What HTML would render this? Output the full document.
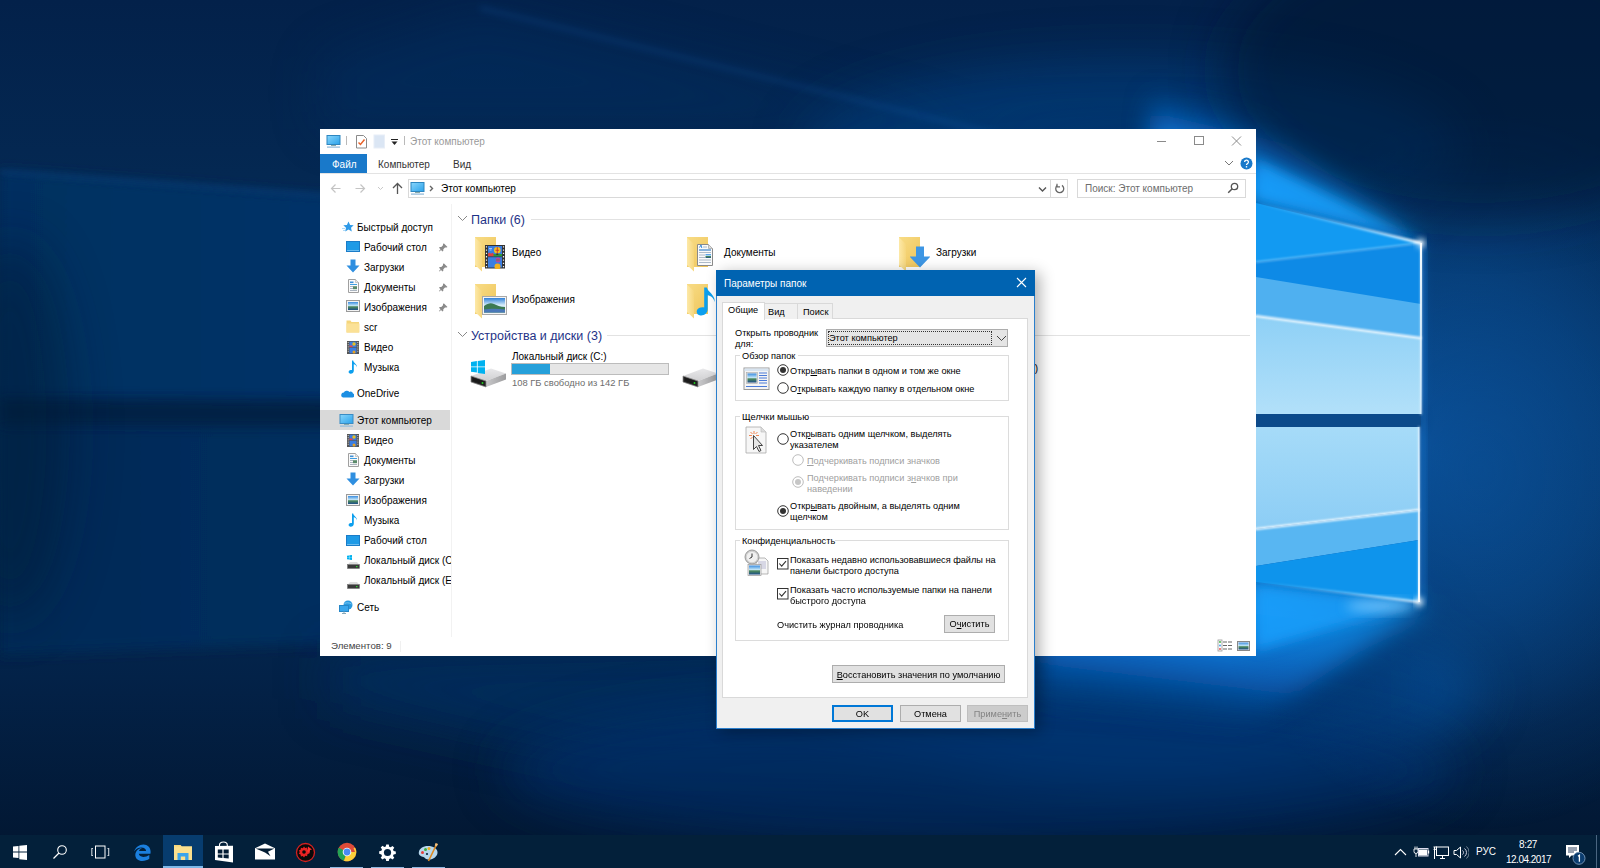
<!DOCTYPE html>
<html><head><meta charset="utf-8">
<style>
*{margin:0;padding:0;box-sizing:border-box}
html,body{width:1600px;height:868px;overflow:hidden;background:#022550}
body{position:relative;font-family:"Liberation Sans",sans-serif;font-size:10px;color:#000}
.a{position:absolute;white-space:nowrap;line-height:12px}
.d{font-size:9.2px;line-height:11px}
u{text-decoration:underline;text-underline-offset:1px}
#wall{position:absolute;left:0;top:0}
#exp{position:absolute;left:320px;top:129px;width:936px;height:527px;background:#fff}
#dlg{position:absolute;left:716px;top:270px;width:319px;height:459px;background:#f0f0f0;border:1px solid #2b7fcc;border-top:none;box-shadow:5px 3px 14px rgba(0,0,0,.3)}
#tb{position:absolute;left:0;top:835px;width:1600px;height:33px;background:#03203a}
</style></head><body>
<svg id="wall" width="1600" height="868" viewBox="0 0 1600 868">
<defs>
<linearGradient id="bg" x1="0" y1="0" x2="0" y2="1">
<stop offset="0" stop-color="#03214a"/>
<stop offset=".2" stop-color="#042852"/>
<stop offset=".5" stop-color="#04305f"/>
<stop offset=".78" stop-color="#032248"/>
<stop offset=".96" stop-color="#021834"/>
<stop offset="1" stop-color="#021630"/>
</linearGradient>
<linearGradient id="pu" x1="0" y1="0" x2="1600" y2="0" gradientUnits="userSpaceOnUse">
<stop offset="0" stop-color="#042f60"/>
<stop offset=".5" stop-color="#053a72"/>
<stop offset=".78" stop-color="#0a5cb0"/>
<stop offset=".88" stop-color="#1278d8"/>
</linearGradient>
<linearGradient id="pl" x1="0" y1="0" x2="1600" y2="0" gradientUnits="userSpaceOnUse">
<stop offset="0" stop-color="#032a56"/>
<stop offset=".5" stop-color="#04346a"/>
<stop offset=".78" stop-color="#0a5cb0"/>
<stop offset=".88" stop-color="#1278d8"/>
</linearGradient>
<radialGradient id="gc1" cx="1421" cy="243" r="330" gradientUnits="userSpaceOnUse">
<stop offset="0" stop-color="#52b4ff" stop-opacity="1"/>
<stop offset=".12" stop-color="#1e8ef0" stop-opacity=".95"/>
<stop offset=".4" stop-color="#0c66c4" stop-opacity=".7"/>
<stop offset="1" stop-color="#0a4a90" stop-opacity="0"/>
</radialGradient>
<radialGradient id="gc2" cx="1419" cy="601" r="380" gradientUnits="userSpaceOnUse">
<stop offset="0" stop-color="#52b4ff" stop-opacity="1"/>
<stop offset=".12" stop-color="#1e8ef0" stop-opacity=".95"/>
<stop offset=".4" stop-color="#0c66c4" stop-opacity=".7"/>
<stop offset="1" stop-color="#0a4a90" stop-opacity="0"/>
</radialGradient>
<radialGradient id="gr" cx="1421" cy="450" r="300" gradientUnits="userSpaceOnUse">
<stop offset="0" stop-color="#0b55a2" stop-opacity="1"/>
<stop offset=".6" stop-color="#074482" stop-opacity=".6"/>
<stop offset="1" stop-color="#063a70" stop-opacity="0"/>
</radialGradient>
<linearGradient id="up1" x1="0" y1="0" x2="0" y2="1">
<stop offset="0" stop-color="#1282e0"/>
<stop offset="1" stop-color="#1a8ce6"/>
</linearGradient>
<linearGradient id="up3" x1="0" y1="0" x2="0" y2="1">
<stop offset="0" stop-color="#8ed0f6"/>
<stop offset="1" stop-color="#b2e0f9"/>
</linearGradient>
<linearGradient id="lo1" x1="0" y1="0" x2="0" y2="1">
<stop offset="0" stop-color="#a6dbf8"/>
<stop offset="1" stop-color="#8ccdf5"/>
</linearGradient>
<filter id="b1" x="-5%" y="-5%" width="110%" height="110%"><feGaussianBlur stdDeviation="1"/></filter>
<filter id="b3" x="-20%" y="-20%" width="140%" height="140%"><feGaussianBlur stdDeviation="3"/></filter>
<filter id="b12" x="-50%" y="-50%" width="200%" height="200%"><feGaussianBlur stdDeviation="12"/></filter>
<filter id="b25" x="-50%" y="-50%" width="200%" height="200%"><feGaussianBlur stdDeviation="25"/></filter>
<filter id="b6" x="-50%" y="-50%" width="200%" height="200%"><feGaussianBlur stdDeviation="6"/></filter>
<radialGradient id="grr" cx="1480" cy="470" r="300" gradientUnits="userSpaceOnUse" gradientTransform="translate(1480 470) scale(1 1.2) translate(-1480 -470)">
<stop offset="0" stop-color="#0a4c90" stop-opacity=".7"/>
<stop offset=".6" stop-color="#0a4a8e" stop-opacity=".35"/>
<stop offset="1" stop-color="#0a4a8e" stop-opacity="0"/>
</radialGradient>
</defs>
<rect width="1600" height="868" fill="url(#bg)"/>
<rect x="1100" y="0" width="500" height="868" fill="url(#gr)"/>
<!-- pane projections -->
<g filter="url(#b6)">
<polygon points="0,170 330,196 1256,203 1421,243 1421,400 0,400" fill="url(#pu)"/>
<polygon points="0,426 1419,427 1419,601 1000,640 330,643 0,655" fill="url(#pl)"/>
</g>
<g filter="url(#b25)">
<ellipse cx="1130" cy="150" rx="330" ry="90" fill="#0a56a8" opacity=".35"/>
<ellipse cx="1150" cy="690" rx="330" ry="90" fill="#0a56a8" opacity=".55"/>
<polygon points="330,656 1000,640 1419,601 1419,760 600,760 330,700" fill="#053068" opacity=".6"/>
</g>
<polygon points="0,398 1421,412 1421,428 0,426" fill="#021b3c" opacity=".75" filter="url(#b6)"/>
<ellipse cx="10" cy="430" rx="60" ry="190" fill="#021a38" opacity=".5" filter="url(#b25)"/>
<ellipse cx="980" cy="770" rx="480" ry="75" fill="#053270" opacity=".6" filter="url(#b25)"/>
<path d="M0,172 L330,196" stroke="#1a5aa0" stroke-width="4" opacity=".3" filter="url(#b3)"/>
<path d="M480,8 L1000,135" stroke="#1a63b5" stroke-width="6" opacity=".2" filter="url(#b3)"/>
<polygon points="480,8 1256,200 1256,129 320,129 320,60" fill="#053068" opacity=".35" filter="url(#b25)"/>
<!-- fans -->
<defs>
<linearGradient id="fanU" x1="1300" y1="214" x2="1321" y2="126" gradientUnits="userSpaceOnUse">
<stop offset="0" stop-color="#1aa6ff"/>
<stop offset=".3" stop-color="#0e8ef0"/>
<stop offset=".65" stop-color="#0a66c4" stop-opacity=".8"/>
<stop offset="1" stop-color="#0a4a90" stop-opacity="0"/>
</linearGradient>
<linearGradient id="fanL" x1="1300" y1="587" x2="1282" y2="736" gradientUnits="userSpaceOnUse">
<stop offset="0" stop-color="#1aa6ff"/>
<stop offset=".3" stop-color="#0e8ef0"/>
<stop offset=".65" stop-color="#0a66c4" stop-opacity=".8"/>
<stop offset="1" stop-color="#0a4a90" stop-opacity="0"/>
</linearGradient>
</defs>
<g filter="url(#b12)">
<polygon points="1425,243 1256,203 1150,178 1150,90 1256,120" fill="url(#fanU)"/>
<polygon points="1423,602 1256,582 1040,556 1040,760 1256,720 1423,610" fill="url(#fanL)"/>
</g>
<rect x="1100" y="0" width="500" height="868" fill="url(#grr)"/>
<ellipse cx="1480" cy="70" rx="260" ry="150" fill="#011632" opacity=".55" filter="url(#b25)"/>
<linearGradient id="streak" x1="1256" y1="0" x2="1421" y2="0" gradientUnits="userSpaceOnUse"><stop offset="0" stop-color="#8fd4ff" stop-opacity="0"/><stop offset=".5" stop-color="#aee0ff" stop-opacity=".5"/><stop offset="1" stop-color="#ffffff" stop-opacity="1"/></linearGradient>
<rect x="1420" y="243" width="6" height="360" fill="#1a78d0" opacity=".45" filter="url(#b3)"/>
<g filter="url(#b6)"><polygon points="1423,243 1256,200 1256,160" fill="#1aa2ff" opacity=".75"/><polygon points="1423,602 1256,584 1256,650" fill="#1aa2ff" opacity=".75"/></g>
<!-- upper pane -->
<polygon points="1256,203 1421,243 1421,414 1256,414" fill="#129af2"/>
<polygon points="1256,262 1421,243 1421,414 1256,414" fill="#0e8ae6"/>
<polygon points="1256,277 1421,304 1421,414 1256,414" fill="#4fb0f0"/>
<polygon points="1256,316 1421,338 1421,414 1256,414" fill="url(#up3)"/>
<!-- lower pane -->
<polygon points="1256,427 1419,427 1419,510 1256,529" fill="url(#lo1)"/>
<polygon points="1256,529 1419,510 1419,540 1256,566" fill="#58b6f2"/>
<polygon points="1256,566 1419,540 1419,602 1256,582" fill="#0e94ec"/>
<rect x="1256" y="414" width="165" height="13" fill="#0c4a8a"/>
<linearGradient id="vedgeU" x1="0" y1="243" x2="0" y2="414" gradientUnits="userSpaceOnUse"><stop offset="0" stop-color="#fff"/><stop offset=".5" stop-color="#e8f6ff" stop-opacity=".8"/><stop offset="1" stop-color="#cfeaff" stop-opacity=".5"/></linearGradient>
<linearGradient id="vedgeL" x1="0" y1="602" x2="0" y2="427" gradientUnits="userSpaceOnUse"><stop offset="0" stop-color="#fff"/><stop offset=".5" stop-color="#e8f6ff" stop-opacity=".8"/><stop offset="1" stop-color="#cfeaff" stop-opacity=".5"/></linearGradient>
<rect x="1420" y="243" width="2" height="171" fill="url(#vedgeU)"/>
<rect x="1418" y="427" width="2" height="175" fill="url(#vedgeL)"/>
<!-- light lines -->
<g filter="url(#b1)" stroke-linecap="round">
<path d="M1256,203 L1421,243" stroke="url(#streak)" stroke-width="2.5"/>

<path d="M1256,262 L1421,243" stroke="#c8eaff" stroke-width="1.2" opacity=".75"/>
<path d="M1256,316 L1421,338" stroke="#ffffff" stroke-width="2.2"/>
<path d="M1256,529 L1419,510" stroke="#ffffff" stroke-width="2.2"/>
<path d="M1256,582 L1419,602" stroke="url(#streak)" stroke-width="2.2"/>
<path d="M1421,243 L1421,414 M1419,427 L1419,602" stroke="#e8f6ff" stroke-width="1.3" opacity=".9"/>
</g>
<g filter="url(#b3)">
<circle cx="1421" cy="243" r="4" fill="#ffffff"/>
<circle cx="1419" cy="602" r="4" fill="#ffffff"/>

</g><g filter="url(#b6)"><ellipse cx="1380" cy="606" rx="34" ry="6" fill="#9fd8ff" opacity=".6"/>
</g>
</svg>

<div id="exp"></div>
<svg width="0" height="0" style="position:absolute">
<defs>
<linearGradient id="mon2" x1="0" y1="0" x2="1" y2="1"><stop offset="0" stop-color="#8ad6fc"/><stop offset="1" stop-color="#2aa2ea"/></linearGradient>
<linearGradient id="fback" x1="0" y1="0" x2="1" y2="1"><stop offset="0" stop-color="#f8dc86"/><stop offset="1" stop-color="#efc55a"/></linearGradient>
<linearGradient id="fflap" x1="0" y1="0" x2="1" y2="0"><stop offset="0" stop-color="#fde9a8"/><stop offset="1" stop-color="#f6d67c"/></linearGradient>
<linearGradient id="sky" x1="0" y1="0" x2="0" y2="1"><stop offset="0" stop-color="#3a8de0"/><stop offset=".45" stop-color="#bfe3f7"/><stop offset=".6" stop-color="#4d8a5a"/><stop offset="1" stop-color="#1e4f8a"/></linearGradient>
<linearGradient id="sky2" x1="0" y1="0" x2="0" y2="1"><stop offset="0" stop-color="#2f80d8"/><stop offset=".5" stop-color="#d8eefa"/><stop offset="1" stop-color="#a8d0ee"/></linearGradient>
<linearGradient id="drvtop" x1="0" y1="0" x2="0" y2="1"><stop offset="0" stop-color="#e8e8ea"/><stop offset="1" stop-color="#d0d0d2"/></linearGradient>
<linearGradient id="drvr" x1="0" y1="0" x2="1" y2="0"><stop offset="0" stop-color="#c9c9cb"/><stop offset="1" stop-color="#9c9c9e"/></linearGradient>
<symbol id="i-mon" viewBox="0 0 15 15"><rect x="1" y="1.5" width="13" height="9" fill="url(#mon2)" stroke="#3a8cc4" stroke-width="1"/><rect x="5" y="11" width="5" height="1" fill="#8aa"/><rect x="1" y="12.5" width="13" height="1.2" fill="#93bcdc"/></symbol>
<symbol id="i-star" viewBox="0 0 12 11"><path d="M6.5 0.5l1.6 3.4 3.6.4-2.7 2.5.8 3.7-3.3-1.9-3.3 1.9.8-3.7L1.3 4.3l3.6-.4z" fill="#2e9ae8"/><path d="M0 7.5h3M1 9.5h2" stroke="#9ad0f5" stroke-width=".8"/></symbol>
<symbol id="i-desk" viewBox="0 0 14 11"><rect x="0.5" y="0.5" width="13" height="10" fill="#1e9ae6" stroke="#1a7cc8"/><rect x="1" y="9" width="12" height="1" fill="#6cbdf0"/></symbol>
<symbol id="i-dl" viewBox="0 0 14 14"><path d="M4.5 0.5h5v6h4l-6.5 7-6.5-7h4z" fill="#2f8fe0"/></symbol>
<symbol id="i-doc" viewBox="0 0 11 14"><path d="M0.5 0.5h7l3 3v10h-10z" fill="#fafafa" stroke="#a0a0a0"/><path d="M7.5 .5v3h3" fill="#e8e8e8" stroke="#b0b0b0" stroke-width=".6"/><rect x="2" y="2.5" width="3.5" height="1.6" fill="#3f8fd8"/><rect x="2" y="5" width="7" height="1" fill="#3f9ee0"/><rect x="2" y="7" width="3" height="1" fill="#aab4c0"/><rect x="5" y="7.2" width="4" height="3" fill="#5a8a6a"/><rect x="2" y="9" width="3" height="1" fill="#aab4c0"/><rect x="2" y="11" width="7" height="1" fill="#aab4c0"/></symbol>
<symbol id="i-pic" viewBox="0 0 14 12"><rect x="0.5" y="0.5" width="13" height="11" fill="#f2f2f2" stroke="#9a9a9a"/><rect x="2" y="2" width="10" height="8" fill="url(#sky)"/></symbol>
<symbol id="i-fs" viewBox="0 0 14 13"><path d="M0.5 0.5h4l1 1.5h7.5v10.5h-12.5z" fill="#f5d67c"/><path d="M0.5 3.5h13v9h-13z" fill="#fbe196"/></symbol>
<symbol id="i-vid" viewBox="0 0 12 13"><rect x="0" y="0" width="12" height="13" fill="#555"/><rect x="2.5" y="0.7" width="7" height="5.5" fill="#3b7de0"/><rect x="2.5" y="6.8" width="7" height="5.5" fill="#3b7de0"/><circle cx="7" cy="3" r="1.7" fill="#e8c020"/><rect x="2.5" y="4.5" width="3" height="1.6" fill="#e44"/><circle cx="7" cy="11" r="1.5" fill="#e8a020"/><path d="M1.2 1v11M10.8 1v11" stroke="#ddd" stroke-width=".9" stroke-dasharray="1 1.2"/></symbol>
<symbol id="i-mus" viewBox="0 0 10 14"><path d="M4 0.5h1.2c.5 2.5 4 3.5 3.8 7-.3-1.8-1.8-3-3.2-3.2v6.5c0 2-1.7 3.2-3.4 3-1.6-.2-2.2-1.6-1.5-2.7.8-1.1 2.2-1.3 3.1-1z" fill="#0c9fee"/></symbol>
<symbol id="i-cloud" viewBox="0 0 14 9"><path d="M3 8.5h9.5a2 2 0 0 0 .5-3.9 2.5 2.5 0 0 0-3.6-1.7A3.3 3.3 0 0 0 3.8 3.6 2.5 2.5 0 0 0 3 8.5z" fill="#1c8fe3"/></symbol>
<symbol id="i-drv" viewBox="0 0 13 8"><path d="M1 3.5l2-2.5h7l2 2.5z" fill="#dedede"/><rect x="0.5" y="3.5" width="12" height="4" fill="#3a3a3a" stroke="#777" stroke-width=".6"/><rect x="9" y="5" width="1.5" height="1.2" fill="#3c3"/></symbol>
<symbol id="i-win" viewBox="0 0 10 10"><path d="M0 1.4L4.2.8v3.8H0zM4.8.7L10 0v4.6H4.8zM0 5.2h4.2V9L0 8.4zM4.8 5.2H10V10l-5.2-.7z" fill="#00b2f0"/></symbol>
<symbol id="i-net" viewBox="0 0 14 14"><circle cx="9" cy="5" r="4.5" fill="#2a9ae0"/><path d="M5.5 3.5c2-1 4.5-1 7 .5" stroke="#8fd0f5" stroke-width=".8" fill="none"/><rect x="0.5" y="5.5" width="9" height="6" fill="#3aa6ec" stroke="#2787c8"/><path d="M3 13.5h4M5 11.5v2" stroke="#8ab" stroke-width="1"/></symbol>
<symbol id="i-pin" viewBox="0 0 9 9"><path d="M5 0.5l3.5 3.5-1 .5-1.5 0-1.7 1.7 0 1.5-.8.8-1.5-1.5L.5 8.5 0 8l1.5-1.8L0 4.7l.8-.8h1.5l1.7-1.7V.8z" fill="#8a8a8a"/></symbol>
<symbol id="f-base" viewBox="0 0 32 36"><rect x="1" y="1" width="21" height="30" fill="url(#fback)"/><path d="M1 1.5l7 6.5v27.5l-7-6.5z" fill="url(#fflap)"/></symbol>
<symbol id="o-vid" viewBox="0 0 20 24"><rect x="0" y="0" width="20" height="23.5" fill="#333"/><rect x="3" y="1" width="14" height="10.3" fill="#3a7ee2"/><rect x="3" y="12.2" width="14" height="10.3" fill="#3a7ee2"/><path d="M3 11.3V8.5l1.5-1 1.5 1.3 1.5-1 1.5 1.5v2z" fill="#e04040"/><rect x="8.5" y="9" width="8.5" height="2.3" fill="#2a9a3a"/><circle cx="12.3" cy="5.3" r="3.3" fill="#f0c020"/><path d="M10.5 5.3h3.6M12.3 2v6.6" stroke="#d03030" stroke-width=".9"/><path d="M11.3 8.5h2v1.5h-2z" fill="#333"/><circle cx="13" cy="15" r="2.4" fill="#c040a0"/><path d="M11.2 15h3.6" stroke="#30a040" stroke-width=".8"/><circle cx="12.5" cy="21.5" r="3" fill="#f0b020"/><path d="M4 3.5h3M4.5 5h2" stroke="#cfe6ff" stroke-width=".7"/><path d="M1.5 1.2v21.5M18.5 1.2v21.5" stroke="#f4f4f4" stroke-width="1.2" stroke-dasharray="1.3 2"/></symbol>
<symbol id="o-doc" viewBox="0 0 16 22"><path d="M0.5 0.5h11l4 4v17h-15z" fill="#fafafa" stroke="#8a8a8a"/><path d="M11.5 .5v4h4" fill="#ddd" stroke="#aaa" stroke-width=".8"/><path d="M2.5 3.5l1.5-2.5.8 3" stroke="#3a8ad8" fill="none" stroke-width="1"/><path d="M6 3h4M2 6h12M2 8.5h12M2 11h6M2 13.5h6M2 16h12M2 18.5h12" stroke="#9ab" stroke-width=".8"/><path d="M2 6h12" stroke="#3a8ad8" stroke-width="1"/><rect x="8.5" y="10" width="5.5" height="4" fill="url(#sky)"/></symbol>
<symbol id="o-dl" viewBox="0 0 20 22"><path d="M5 0.5h8v10h6.5L9 21.5-1.5 10.5H5z" fill="#3d96e4" transform="translate(1 0)"/></symbol>
<symbol id="o-pic" viewBox="0 0 25 19"><rect x="0.5" y="0.5" width="24" height="18" fill="#f4f4f4" stroke="#a8a8a8"/><rect x="2" y="2" width="21" height="14.5" fill="url(#sky2)"/><path d="M2 10c4-3 7-3.5 10-2 3 1.5 6 3 11 3v5.5H2z" fill="#3c7a52"/><path d="M2 13.5c6-1 14-1 21 0v3H2z" fill="#4a78b8"/></symbol>
<symbol id="o-mus" viewBox="0 0 16 24"><path d="M6.5 0.5h2.2c1 4 7 6 6.5 12-.6-3.2-3.3-5.5-5.8-5.7v11.5c0 3.6-3 5.5-6 5.2-2.8-.3-3.8-2.9-2.6-4.8 1.4-2 3.9-2.3 5.7-1.8z" fill="#0c9fee"/></symbol>
<symbol id="d-box" viewBox="0 0 36 20"><path d="M1 8l20-7.5 15 5-20 7.5z" fill="url(#drvtop)"/><path d="M16 13l20-7.5v6L16 19z" fill="url(#drvr)"/><path d="M1 8l15 5v6l-15-5z" fill="#2a2a2a" stroke="#888" stroke-width=".7"/><path d="M2.5 9.5l12 4v3.5l-12-4z" fill="#1a1a1a"/><circle cx="12.5" cy="15" r="1" fill="#2c2"/></symbol>
</defs></svg>
<!-- EXPLORER -->
<svg class="a" style="left:326px;top:134px" width="15" height="15" viewBox="0 0 15 15"><defs><linearGradient id="mon" x1="0" y1="0" x2="1" y2="1"><stop offset="0" stop-color="#8ad6fc"/><stop offset="1" stop-color="#2aa2ea"/></linearGradient></defs><rect x="1" y="1.5" width="13" height="9" fill="url(#mon)" stroke="#2d86c0" stroke-width="1"/><rect x="5" y="11" width="5" height="1" fill="#8aa"/><rect x="1" y="12.5" width="13" height="1.2" fill="#8fb8d8"/></svg>
<div class="a" style="left:346px;top:136px;width:1px;height:9px;background:#b9b9b9"></div>
<svg class="a" style="left:355px;top:134px" width="13" height="15" viewBox="0 0 13 15"><path d="M1.5 1.5h7l3 3v9.5h-10z" fill="#fff" stroke="#8a8a8a"/><path d="M3.5 8.5l2 2 4-5" fill="none" stroke="#e8622a" stroke-width="1.5"/></svg>
<svg class="a" style="left:373px;top:134px" width="13" height="15" viewBox="0 0 13 15"><rect x="1" y="1" width="10.5" height="13" fill="#dbe6f4" stroke="#e8eef7"/></svg>
<svg class="a" style="left:390px;top:138px" width="9" height="8" viewBox="0 0 9 8"><rect x="1" y="1" width="7" height="1" fill="#222"/><path d="M1.5 3.5h6l-3 3.5z" fill="#222"/></svg>
<div class="a" style="left:404px;top:136px;width:1px;height:9px;background:#b9b9b9"></div>
<div class="a" style="left:410px;top:136px;color:#9a9a9a">Этот компьютер</div>
<svg class="a" style="left:1157px;top:141px" width="10" height="2"><rect x="0" y="0" width="9" height="1" fill="#8a8a8a"/></svg>
<div class="a" style="left:1194px;top:136px;width:10px;height:9px;border:1px solid #8a8a8a"></div>
<svg class="a" style="left:1231px;top:136px" width="11" height="10" viewBox="0 0 11 10"><path d="M1 0.5L10 9.5M10 0.5L1 9.5" stroke="#8a8a8a" stroke-width="1"/></svg>
<div class="a" style="left:320px;top:154px;width:47px;height:19px;background:#1979ca"></div>
<div class="a" style="left:332px;top:159px;color:#fff">Файл</div>
<div class="a" style="left:378px;top:159px;color:#333">Компьютер</div>
<div class="a" style="left:453px;top:159px;color:#333">Вид</div>
<div class="a" style="left:320px;top:173px;width:936px;height:1px;background:#e3e3e3"></div>
<svg class="a" style="left:1224px;top:159px" width="10" height="8" viewBox="0 0 10 8"><path d="M1 2l4 4 4-4" fill="none" stroke="#777" stroke-width="1"/></svg>
<svg class="a" style="left:1240px;top:157px" width="13" height="13" viewBox="0 0 13 13"><circle cx="6.5" cy="6.5" r="6" fill="#1979ca"/><path d="M4.6 5.1a1.9 1.9 0 1 1 2.6 1.7c-.6.3-.7.6-.7 1.3" fill="none" stroke="#fff" stroke-width="1.3"/><rect x="5.8" y="9.1" width="1.4" height="1.4" fill="#fff"/></svg>
<!-- nav arrows -->
<svg class="a" style="left:330px;top:183px" width="11" height="11" viewBox="0 0 11 11"><path d="M10.5 5.5H1.5M5.5 1.5l-4 4 4 4" fill="none" stroke="#c4c4c4" stroke-width="1.2"/></svg>
<svg class="a" style="left:355px;top:183px" width="11" height="11" viewBox="0 0 11 11"><path d="M0.5 5.5h9M5.5 1.5l4 4-4 4" fill="none" stroke="#c4c4c4" stroke-width="1.2"/></svg>
<svg class="a" style="left:377px;top:186px" width="7" height="5" viewBox="0 0 7 5"><path d="M1 1l2.5 2.5L6 1" fill="none" stroke="#c8c8c8" stroke-width="1"/></svg>
<svg class="a" style="left:392px;top:182px" width="11" height="12" viewBox="0 0 11 12"><path d="M5.5 12V1.5M1 6l4.5-4.5L10 6" fill="none" stroke="#555" stroke-width="1.3"/></svg>
<div class="a" style="left:408px;top:179px;width:660px;height:19px;border:1px solid #d9d9d9"></div>
<div class="a" style="left:1050px;top:180px;width:1px;height:17px;background:#d9d9d9"></div>
<svg class="a" style="left:410px;top:181px" width="15" height="15" viewBox="0 0 15 15"><rect x="1" y="1.5" width="13" height="9" fill="url(#mon)" stroke="#2d86c0" stroke-width="1"/><rect x="5" y="11" width="5" height="1" fill="#8aa"/><rect x="1" y="12.5" width="13" height="1.2" fill="#8fb8d8"/></svg>
<svg class="a" style="left:429px;top:185px" width="5" height="7" viewBox="0 0 5 7"><path d="M1 1l2.5 2.5L1 6" fill="none" stroke="#666" stroke-width="1.4"/></svg>
<div class="a" style="left:441px;top:183px;color:#000">Этот компьютер</div>
<svg class="a" style="left:1038px;top:186px" width="9" height="7" viewBox="0 0 9 7"><path d="M1 1.5l3.5 3.5L8 1.5" fill="none" stroke="#555" stroke-width="1.4"/></svg>
<svg class="a" style="left:1054px;top:183px" width="11" height="11" viewBox="0 0 11 11"><path d="M3.2 2.6A4 4 0 1 0 8 2.4" fill="none" stroke="#666" stroke-width="1.3"/><path d="M3 0.8v3h3" fill="none" stroke="#666" stroke-width="1.2"/></svg>
<div class="a" style="left:1077px;top:179px;width:169px;height:19px;border:1px solid #d9d9d9"></div>
<div class="a" style="left:1085px;top:183px;color:#6d6d6d">Поиск: Этот компьютер</div>
<svg class="a" style="left:1227px;top:182px" width="12" height="12" viewBox="0 0 12 12"><circle cx="7.5" cy="4.5" r="3.2" fill="none" stroke="#555" stroke-width="1.3"/><path d="M5.2 6.8L1.2 10.8" stroke="#555" stroke-width="1.5"/></svg>

<div class="a" style="left:320px;top:410px;width:130px;height:20px;background:#d9d9d9"></div>
<div class="a" style="left:451px;top:204px;width:1px;height:433px;background:#f2f2f2"></div>
<svg class="a" style="left:342px;top:221px" width="12" height="11"><use href="#i-star" width="12" height="11"/></svg>
<div class="a" style="left:357px;top:222px">Быстрый доступ</div>
<svg class="a" style="left:346px;top:241px" width="14" height="11"><use href="#i-desk" width="14" height="11"/></svg>
<div class="a" style="left:364px;top:242px">Рабочий стол</div>
<svg class="a" style="left:439px;top:243px" width="9" height="9"><use href="#i-pin" width="9" height="9"/></svg>
<svg class="a" style="left:346px;top:259px" width="14" height="14"><use href="#i-dl" width="14" height="14"/></svg>
<div class="a" style="left:364px;top:262px">Загрузки</div>
<svg class="a" style="left:439px;top:263px" width="9" height="9"><use href="#i-pin" width="9" height="9"/></svg>
<svg class="a" style="left:348px;top:279px" width="11" height="14"><use href="#i-doc" width="11" height="14"/></svg>
<div class="a" style="left:364px;top:282px">Документы</div>
<svg class="a" style="left:439px;top:283px" width="9" height="9"><use href="#i-pin" width="9" height="9"/></svg>
<svg class="a" style="left:346px;top:300px" width="14" height="12"><use href="#i-pic" width="14" height="12"/></svg>
<div class="a" style="left:364px;top:302px">Изображения</div>
<svg class="a" style="left:439px;top:303px" width="9" height="9"><use href="#i-pin" width="9" height="9"/></svg>
<svg class="a" style="left:346px;top:320px" width="14" height="13"><use href="#i-fs" width="14" height="13"/></svg>
<div class="a" style="left:364px;top:322px">scr</div>
<svg class="a" style="left:347px;top:341px" width="12" height="13"><use href="#i-vid" width="12" height="13"/></svg>
<div class="a" style="left:364px;top:342px">Видео</div>
<svg class="a" style="left:348px;top:360px" width="10" height="14"><use href="#i-mus" width="10" height="14"/></svg>
<div class="a" style="left:364px;top:362px">Музыка</div>
<svg class="a" style="left:340px;top:389px" width="14" height="9"><use href="#i-cloud" width="14" height="9"/></svg>
<div class="a" style="left:357px;top:388px">OneDrive</div>
<svg class="a" style="left:339px;top:413px" width="15" height="15"><use href="#i-mon" width="15" height="15"/></svg>
<div class="a" style="left:357px;top:415px">Этот компьютер</div>
<svg class="a" style="left:347px;top:434px" width="12" height="13"><use href="#i-vid" width="12" height="13"/></svg>
<div class="a" style="left:364px;top:435px">Видео</div>
<svg class="a" style="left:348px;top:453px" width="11" height="14"><use href="#i-doc" width="11" height="14"/></svg>
<div class="a" style="left:364px;top:455px">Документы</div>
<svg class="a" style="left:346px;top:472px" width="14" height="14"><use href="#i-dl" width="14" height="14"/></svg>
<div class="a" style="left:364px;top:475px">Загрузки</div>
<svg class="a" style="left:346px;top:494px" width="14" height="12"><use href="#i-pic" width="14" height="12"/></svg>
<div class="a" style="left:364px;top:495px">Изображения</div>
<svg class="a" style="left:348px;top:513px" width="10" height="14"><use href="#i-mus" width="10" height="14"/></svg>
<div class="a" style="left:364px;top:515px">Музыка</div>
<svg class="a" style="left:346px;top:535px" width="14" height="11"><use href="#i-desk" width="14" height="11"/></svg>
<div class="a" style="left:364px;top:535px">Рабочий стол</div>
<div class="a" style="left:340px;top:550px;width:111px;height:40px;overflow:hidden"><div class="a" style="left:24px;top:5px">Локальный диск (C:)</div><div class="a" style="left:24px;top:25px">Локальный диск (E:)</div></div>
<svg class="a" style="left:347px;top:555px" width="5" height="5"><use href="#i-win" width="5" height="5"/></svg>
<svg class="a" style="left:347px;top:561px" width="13" height="8"><use href="#i-drv" width="13" height="8"/></svg>
<svg class="a" style="left:347px;top:581px" width="13" height="8"><use href="#i-drv" width="13" height="8"/></svg>
<svg class="a" style="left:339px;top:600px" width="14" height="14"><use href="#i-net" width="14" height="14"/></svg>
<div class="a" style="left:357px;top:602px">Сеть</div>
<svg class="a" style="left:457px;top:215px" width="11" height="7"><path d="M1 1l4.5 4.5L10 1" fill="none" stroke="#888" stroke-width="1"/></svg>
<div class="a" style="left:471px;top:213px;color:#1e3287;font-size:12.5px;line-height:14px">Папки (6)</div>
<div class="a" style="left:531px;top:219px;width:719px;height:1px;background:#e2e2e2"></div>
<svg class="a" style="left:457px;top:331px" width="11" height="7"><path d="M1 1l4.5 4.5L10 1" fill="none" stroke="#888" stroke-width="1"/></svg>
<div class="a" style="left:471px;top:329px;color:#1e3287;font-size:12.5px;line-height:14px">Устройства и диски (3)</div>
<div class="a" style="left:607px;top:335px;width:643px;height:1px;background:#e2e2e2"></div>
<svg class="a" style="left:474px;top:236px" width="32" height="36"><use href="#f-base" width="32" height="36"/></svg>
<svg class="a" style="left:485px;top:245px" width="20" height="24"><use href="#o-vid" width="20" height="24"/></svg>
<div class="a" style="left:512px;top:247px">Видео</div>
<svg class="a" style="left:686px;top:236px" width="32" height="36"><use href="#f-base" width="32" height="36"/></svg>
<svg class="a" style="left:697px;top:244px" width="16" height="22"><use href="#o-doc" width="16" height="22"/></svg>
<div class="a" style="left:724px;top:247px">Документы</div>
<svg class="a" style="left:898px;top:236px" width="32" height="36"><use href="#f-base" width="32" height="36"/></svg>
<svg class="a" style="left:910px;top:246px" width="20" height="22"><use href="#o-dl" width="20" height="22"/></svg>
<div class="a" style="left:936px;top:247px">Загрузки</div>
<svg class="a" style="left:474px;top:283px" width="32" height="36"><use href="#f-base" width="32" height="36"/></svg>
<svg class="a" style="left:482px;top:296px" width="25" height="19"><use href="#o-pic" width="25" height="19"/></svg>
<div class="a" style="left:512px;top:294px">Изображения</div>
<svg class="a" style="left:686px;top:283px" width="32" height="36"><use href="#f-base" width="32" height="36"/></svg>
<svg class="a" style="left:696px;top:287px" width="20" height="29"><use href="#o-mus" width="20" height="29"/></svg>
<div class="a" style="left:724px;top:294px">Музыка</div>
<svg class="a" style="left:470px;top:368px" width="36" height="20"><use href="#d-box" width="36" height="20"/></svg>
<svg class="a" style="left:471px;top:360px" width="14" height="14"><use href="#i-win" width="14" height="14"/></svg>
<div class="a" style="left:512px;top:351px">Локальный диск (C:)</div>
<div class="a" style="left:511px;top:363px;width:158px;height:12px;background:#e6e6e6;border:1px solid #bcbcbc"></div>
<div class="a" style="left:512px;top:364px;width:38px;height:10px;background:#26a0da"></div>
<div class="a" style="left:512px;top:377px;color:#6d6d6d;font-size:9.4px">108 ГБ свободно из 142 ГБ</div>
<svg class="a" style="left:682px;top:368px" width="36" height="20"><use href="#d-box" width="36" height="20"/></svg>
<div class="a" style="left:888px;top:363px;width:150px;text-align:right">DVD RW дисковод (E:)</div>
<div class="a" style="left:331px;top:640px;color:#444;font-size:9.7px">Элементов: 9</div>
<div class="a" style="left:400px;top:641px;width:1px;height:11px;background:#f0f0f0"></div>
<svg class="a" style="left:1217px;top:639px" width="16" height="13" viewBox="0 0 16 13"><rect x="1" y="1" width="4" height="11" fill="#fff" stroke="#999" stroke-width=".8"/><circle cx="3" cy="3" r=".9" fill="#3a3"/><circle cx="3" cy="6.5" r=".9" fill="#39e"/><circle cx="3" cy="10" r=".9" fill="#e44"/><path d="M6 3h4M11 3h4M6 6.5h4M11 6.5h4M6 10h4M11 10h4" stroke="#666" stroke-width="1"/></svg>
<svg class="a" style="left:1237px;top:641px" width="13" height="10" viewBox="0 0 13 10"><rect x=".5" y=".5" width="12" height="9" fill="#eee" stroke="#888"/><rect x="1.5" y="1.5" width="10" height="7" fill="url(#sky)"/></svg>
<div id="dlg"></div>
<div class="a" style="left:716px;top:270px;width:319px;height:26px;background:#0063b1"></div>
<div class="a" style="left:724px;top:278px;color:#fff;font-size:10px">Параметры папок</div>
<svg class="a" style="left:1016px;top:277px" width="11" height="11" viewBox="0 0 11 11"><path d="M1 1l9 9M10 1l-9 9" stroke="#fff" stroke-width="1.1"/></svg>
<div class="a" style="left:722px;top:318px;width:306px;height:380px;background:#fff;border:1px solid #d9d9d9"></div>
<div class="a" style="left:764px;top:303px;width:34px;height:16px;background:#f0f0f0;border:1px solid #d9d9d9;border-bottom:none"></div>
<div class="a" style="left:797px;top:303px;width:36px;height:16px;background:#f0f0f0;border:1px solid #d9d9d9;border-bottom:none"></div>
<div class="a" style="left:722px;top:302px;width:43px;height:18px;background:#fff;border:1px solid #d9d9d9;border-bottom:none"></div>
<div class="a d" style="left:728px;top:305px">Общие</div>
<div class="a d" style="left:768px;top:307px">Вид</div>
<div class="a d" style="left:803px;top:307px">Поиск</div>
<div class="a d" style="left:735px;top:328px">Открыть проводник</div>
<div class="a d" style="left:735px;top:339px">для:</div>
<div class="a" style="left:826px;top:329px;width:182px;height:18px;background:#e5e5e5;border:1px solid #adadad"></div>
<div class="a" style="left:828px;top:331px;width:164px;height:14px;border:1px dotted #333"></div>
<div class="a d" style="left:829px;top:333px">Этот компьютер</div>
<svg class="a" style="left:996px;top:335px" width="11" height="7"><path d="M1 1l4.5 4.5L10 1" fill="none" stroke="#444" stroke-width="1"/></svg>
<div class="a" style="left:735px;top:355px;width:274px;height:46px;border:1px solid #dcdcdc"></div>
<div class="a" style="left:740px;top:352px;width:58px;height:6px;background:#fff"></div>
<div class="a d" style="left:742px;top:351px">Обзор папок</div>
<div class="a" style="left:735px;top:416px;width:274px;height:114px;border:1px solid #dcdcdc"></div>
<div class="a" style="left:740px;top:413px;width:70px;height:6px;background:#fff"></div>
<div class="a d" style="left:742px;top:412px">Щелчки мышью</div>
<div class="a" style="left:735px;top:540px;width:274px;height:101px;border:1px solid #dcdcdc"></div>
<div class="a" style="left:740px;top:537px;width:95px;height:6px;background:#fff"></div>
<div class="a d" style="left:742px;top:536px">Конфиденциальность</div>
<svg class="a" style="left:777px;top:364px" width="12" height="12" viewBox="0 0 12 12"><circle cx="6" cy="6" r="5.3" fill="#fff" stroke="#333" stroke-width="1"/><circle cx="6" cy="6" r="3" fill="#333"/></svg>
<div class="a d" style="left:790px;top:366px">Откр<u>ы</u>вать папки в одном и том же окне</div>
<svg class="a" style="left:777px;top:382px" width="12" height="12" viewBox="0 0 12 12"><circle cx="6" cy="6" r="5.3" fill="#fff" stroke="#333" stroke-width="1"/></svg>
<div class="a d" style="left:790px;top:384px">О<u>т</u>крывать каждую папку в отдельном окне</div>
<svg class="a" style="left:777px;top:433px" width="12" height="12" viewBox="0 0 12 12"><circle cx="6" cy="6" r="5.3" fill="#fff" stroke="#333" stroke-width="1"/></svg>
<div class="a d" style="left:790px;top:429px">Отк<u>р</u>ывать одним щелчком, выделять</div>
<div class="a d" style="left:790px;top:440px">указателем</div>
<svg class="a" style="left:792px;top:454px" width="12" height="12" viewBox="0 0 12 12"><circle cx="6" cy="6" r="5.3" fill="#fff" stroke="#bcbcbc" stroke-width="1"/></svg>
<div class="a d" style="left:807px;top:456px;color:#a0a0a0"><u>П</u>одчеркивать подписи значков</div>
<svg class="a" style="left:792px;top:476px" width="12" height="12" viewBox="0 0 12 12"><circle cx="6" cy="6" r="5.3" fill="#fff" stroke="#bcbcbc" stroke-width="1"/><circle cx="6" cy="6" r="3" fill="#c6c6c6"/></svg>
<div class="a d" style="left:807px;top:473px;color:#a0a0a0">Подчеркивать подписи з<u>н</u>ачков при</div>
<div class="a d" style="left:807px;top:484px;color:#a0a0a0">наведении</div>
<svg class="a" style="left:777px;top:505px" width="12" height="12" viewBox="0 0 12 12"><circle cx="6" cy="6" r="5.3" fill="#fff" stroke="#333" stroke-width="1"/><circle cx="6" cy="6" r="3" fill="#333"/></svg>
<div class="a d" style="left:790px;top:501px">Откр<u>ы</u>вать двойным, а выделять одним</div>
<div class="a d" style="left:790px;top:512px">щелчком</div>
<svg class="a" style="left:777px;top:558px" width="12" height="12" viewBox="0 0 12 12"><rect x=".5" y=".5" width="10.5" height="10.5" fill="#fff" stroke="#333"/><path d="M2.3 5.5l2.4 2.6 4.3-5" fill="none" stroke="#333" stroke-width="1.1"/></svg>
<div class="a d" style="left:790px;top:555px">Показать недавно использовавшиеся файлы на</div>
<div class="a d" style="left:790px;top:566px">панели быстрого доступа</div>
<svg class="a" style="left:777px;top:588px" width="12" height="12" viewBox="0 0 12 12"><rect x=".5" y=".5" width="10.5" height="10.5" fill="#fff" stroke="#333"/><path d="M2.3 5.5l2.4 2.6 4.3-5" fill="none" stroke="#333" stroke-width="1.1"/></svg>
<div class="a d" style="left:790px;top:585px">Показать часто используемые папки на панели</div>
<div class="a d" style="left:790px;top:596px">быстрого доступа</div>
<div class="a d" style="left:777px;top:620px">Очистить журнал проводника</div>
<div class="a d" style="left:944px;top:615px;width:51px;height:18px;background:#e1e1e1;border:1px solid #adadad;color:#000;text-align:center;line-height:16px">О<u>ч</u>истить</div>
<div class="a d" style="left:832px;top:665px;width:173px;height:18px;background:#e1e1e1;border:1px solid #adadad;color:#000;text-align:center;padding-top:1px;line-height:16px"><u>В</u>осстановить значения по умолчанию</div>
<div class="a d" style="left:832px;top:705px;width:61px;height:17px;background:#e1e1e1;border:2px solid #0078d7;color:#000;text-align:center;padding-top:1px;line-height:13px">OK</div>
<div class="a d" style="left:900px;top:705px;width:61px;height:17px;background:#e1e1e1;border:1px solid #adadad;color:#000;text-align:center;padding-top:1px;line-height:15px">Отмена</div>
<div class="a d" style="left:967px;top:705px;width:61px;height:17px;background:#cccccc;border:1px solid #bfbfbf;color:#838383;text-align:center;padding-top:1px;line-height:15px">Приме<u>н</u>ить</div>
<svg class="a" style="left:743px;top:367px" width="27" height="24" viewBox="0 0 27 24"><rect x="1" y="1" width="25" height="21.5" fill="#f4f4f4" stroke="#9a9a9a"/><rect x="1.5" y="1.5" width="24" height="2.5" fill="#d8e4f0"/><rect x="3.5" y="5.5" width="11" height="11" fill="#e0e0e0" stroke="#aaa" stroke-width=".6"/><rect x="4.5" y="6.5" width="9" height="9" fill="url(#sky)"/><path d="M16 6h8M16 8.5h8M16 11h8M16 13.5h8M16 16h8M3 19.5h21" stroke="#4a7ad8" stroke-width="1"/></svg>
<svg class="a" style="left:745px;top:426px" width="24" height="28" viewBox="0 0 24 28"><path d="M1 1h15l5 5v21H1z" fill="#f6f6f6" stroke="#aaa" stroke-width=".8"/><path d="M16 1v5h5" fill="#ddd" stroke="#bbb" stroke-width=".6"/><path d="M9 5v3M9 11v3M4 9.5h3M11 9.5h3M5.5 6l2 2M12.5 6l-2 2M5.5 13l2-2" stroke="#f07840" stroke-width=".9"/><path d="M8.5 9.5v14l3-3 2.5 5 2-1-2.5-5h4z" fill="#e6e6e6" stroke="#444" stroke-width="1"/></svg>
<svg class="a" style="left:744px;top:549px" width="26" height="28" viewBox="0 0 26 28"><path d="M12 9h9l3 3v13H12z" fill="#f6f6f6" stroke="#999" stroke-width=".7"/><path d="M14 13h8M14 15h8M14 17h8M14 19h8" stroke="#aac" stroke-width=".8"/><circle cx="8" cy="8" r="7" fill="#cfcfcf" stroke="#888" stroke-width=".8"/><circle cx="8" cy="8" r="5.3" fill="#f0f0f0"/><path d="M8 4.5V8l-2.5 1.5" stroke="#333" fill="none" stroke-width="1"/><rect x="4" y="15.5" width="13" height="11" fill="#eee" stroke="#999" stroke-width=".7"/><rect x="5" y="16.5" width="11" height="9" fill="url(#sky)"/></svg>

<div id="tb"></div>
<div class="a" style="left:163px;top:835px;width:40px;height:33px;background:#073c6e"></div>
<div class="a" style="left:163px;top:866px;width:40px;height:2px;background:#7fb8e8"></div>
<div class="a" style="left:330px;top:867px;width:33px;height:1px;background:#8fb8e0"></div>
<div class="a" style="left:371px;top:867px;width:33px;height:1px;background:#8fb8e0"></div>
<div class="a" style="left:412px;top:867px;width:33px;height:1px;background:#8fb8e0"></div>
<svg class="a" style="left:13px;top:845px" width="15" height="15" viewBox="0 0 15 15"><path d="M0 1.6L5.5 0.9v5.7H0zM6.3 0.8L14 0v6.6H6.3zM0 7.4h5.5v5.7L0 12.4zM6.3 7.4H14V15l-7.7-.8z" fill="#fff"/></svg>
<svg class="a" style="left:52px;top:844px" width="16" height="16" viewBox="0 0 16 16"><circle cx="10" cy="6" r="4.3" fill="none" stroke="#fff" stroke-width="1.1"/><path d="M7 9L1.5 14.5" stroke="#fff" stroke-width="1.2"/></svg>
<svg class="a" style="left:90px;top:845px" width="20" height="14" viewBox="0 0 20 14"><rect x="5.5" y="1" width="9.5" height="12" fill="none" stroke="#fff" stroke-width="1"/><path d="M3 3.5H1.8v7H3M17.5 3.5h1.2v7h-1.2" fill="none" stroke="#ccd2d8" stroke-width="1.1"/></svg>
<svg class="a" style="left:133px;top:843px" width="19" height="19" viewBox="0 0 19 19"><path d="M5.8 10.8h11.6c.2-.6.2-1.3.2-2C17.6 4.3 14.4 1.4 10.6 1.4 6 1.4 2.3 4.3 1.2 8.4 2.8 6 5.6 4.4 8.6 4.5c2.4.1 4.3 1.5 4.5 3.5H6c.6-1.7 2-2.9 3.6-3.3C6 4.9 2.6 7.8 2.3 11.7 2.1 15.5 5.3 18 9.3 18c2.7 0 5.2-.9 7-2.2v-3.9c-1.8 1.3-3.9 2-6 2-2.6 0-4.3-1.3-4.5-3.1z" fill="#1b7fde"/></svg>
<svg class="a" style="left:173px;top:844px" width="20" height="17" viewBox="0 0 20 17"><path d="M1 1h6.5l1.2 1.3H19V16H1z" fill="#fbe08e"/><path d="M1.5 1.5h5.5l.8.8H1.5z" fill="#f0c860"/><path d="M4.5 16V9h11v7h-3.3v-3.5h-4.4V16z" fill="#3aa4ec"/></svg>
<svg class="a" style="left:214px;top:841px" width="20" height="22" viewBox="0 0 20 22"><path d="M5.5 6V4.2C5.5 2.3 7.2 1 9.5 1s3.8 1.3 3.8 3.2V6" fill="none" stroke="#fff" stroke-width="1.1"/><path d="M1 5l18-.2v16.8L1 19z" fill="#fff"/><path d="M3.8 8.5h4.6v4H3.8zM9.6 8.5h5.1v4H9.6zM3.8 13.6h4.6V17l-4.6-.4zM9.6 13.6h5.1v3.8l-5.1-.4z" fill="#031c33"/></svg>
<svg class="a" style="left:254px;top:843px" width="22" height="18" viewBox="0 0 22 18"><path d="M1 5.2L11 0.5l10 4.7V16.5H1z" fill="#fff"/><path d="M1.6 5.5h18.8l-6.4 3.2 2.5 4.6-5.5-3.8z" fill="#031c33"/></svg>
<svg class="a" style="left:295px;top:842px" width="21" height="21" viewBox="0 0 21 21"><circle cx="10.5" cy="10.5" r="9" fill="#0a0a0a" stroke="#d42020" stroke-width="1.3"/><path d="M9 4.5l1.2 1.6 1.9-.5.3 1.9 1.8.8-1 1.6 1 1.6-1.8.8-.3 1.9-1.9-.5L9 15.5l-1.2-1.6-1.9.5-.3-1.9-1.8-.8 1-1.6-1-1.6 1.8-.8.3-1.9 1.9.5z" fill="#e82222"/><circle cx="9" cy="10" r="1.8" fill="#0a0a0a"/><path d="M13 4.5l4 3-2 .5-.5 3.5-2-1.5z" fill="#ff3030"/></svg>
<svg class="a" style="left:337px;top:842px" width="20" height="20" viewBox="0 0 20 20"><circle cx="10" cy="10" r="9.3" fill="#dd4b39"/><path d="M10 10L1.9 5.4A9.3 9.3 0 0 0 7 18.8z" fill="#23a455"/><path d="M10 10l-3 8.8A9.3 9.3 0 0 0 19.3 10 9.3 9.3 0 0 0 18 5.4z" fill="#fcd03a"/><path d="M10 10H18A9.3 9.3 0 0 0 1.9 5.4z" fill="#dd4b39"/><circle cx="10" cy="10" r="4.3" fill="#fff"/><circle cx="10" cy="10" r="3.4" fill="#4a8af4"/></svg>
<svg class="a" style="left:379px;top:844px" width="17" height="17" viewBox="0 0 17 17"><path d="M7.2 0.5h2.6l.4 2.2 1.5.6 1.8-1.3 1.8 1.8-1.3 1.8.6 1.5 2.2.4v2.6l-2.2.4-.6 1.5 1.3 1.8-1.8 1.8-1.8-1.3-1.5.6-.4 2.2H7.2l-.4-2.2-1.5-.6-1.8 1.3-1.8-1.8 1.3-1.8-.6-1.5L.2 9.8V7.2l2.2-.4.6-1.5-1.3-1.8 1.8-1.8 1.8 1.3 1.5-.6z" fill="#fff"/><circle cx="8.5" cy="8.5" r="3.6" fill="#062440"/></svg>
<svg class="a" style="left:418px;top:842px" width="21" height="21" viewBox="0 0 21 21"><path d="M10 4c5 0 9.5 2.5 9.5 6.5S15 18 10 17.5c-3-.3-3-2-4.5-2.5C3 14.5.5 13 .8 10.5 1.2 6.5 5 4 10 4z" fill="#b8d8ee"/><circle cx="4.5" cy="10.5" r="1.5" fill="#e84040"/><circle cx="7.5" cy="7.5" r="1.5" fill="#40b040"/><circle cx="11" cy="6.5" r="1.5" fill="#f0b020"/><circle cx="9" cy="12" r="1.1" fill="#062440"/><path d="M19 1.5L10.5 19" stroke="#e08a20" stroke-width="1.6"/><path d="M17.5 1l2.5 1.2-1.3 2.3-2-1z" fill="#f0c080"/></svg>
<svg class="a" style="left:1394px;top:848px" width="13" height="8" viewBox="0 0 13 8"><path d="M1 7l5.5-5.5L12 7" fill="none" stroke="#fff" stroke-width="1.1"/></svg>
<svg class="a" style="left:1413px;top:846px" width="17" height="12" viewBox="0 0 17 12"><path d="M2 0.5v2.5M4 0.5v2.5M1 3h4v2.5a2 2 0 0 1-4 0zM3 7.5V11" fill="none" stroke="#fff" stroke-width=".9"/><rect x="5.5" y="2.5" width="9.5" height="7.5" fill="none" stroke="#dde" stroke-width="1"/><rect x="6" y="3.5" width="8" height="6" fill="#fff"/><rect x="15" y="4.5" width="1.2" height="3" fill="#fff"/></svg>
<svg class="a" style="left:1433px;top:846px" width="16" height="14" viewBox="0 0 16 14"><rect x="3.5" y="1" width="12" height="8.5" fill="none" stroke="#fff" stroke-width="1"/><path d="M9.5 9.5v2.5M7 12.5h5" stroke="#fff" stroke-width="1"/><path d="M0.5 1h3.5M0.5 3.3h3.5M1.5 1v12" stroke="#fff" stroke-width="1"/></svg>
<svg class="a" style="left:1453px;top:846px" width="16" height="13" viewBox="0 0 16 13"><path d="M1 4.5h2.5L7.5 1v11L3.5 8.5H1z" fill="none" stroke="#fff" stroke-width="1"/><path d="M9.5 4.5a2.5 2.5 0 0 1 0 4M11.5 2.5a5 5 0 0 1 0 8" fill="none" stroke="#ccd" stroke-width="1"/><path d="M13.5 .5a8 8 0 0 1 0 12" fill="none" stroke="#7a8a9a" stroke-width="1"/></svg>
<div class="a" style="left:1476px;top:846px;color:#fff;font-size:10px">РУС</div>
<div class="a" style="left:1519px;top:839px;color:#fff;font-size:10px;letter-spacing:-0.35px">8:27</div>
<div class="a" style="left:1506px;top:854px;color:#fff;font-size:10px;letter-spacing:-0.5px">12.04.2017</div>
<svg class="a" style="left:1565px;top:844px" width="22" height="22" viewBox="0 0 22 22"><path d="M1 1h13v10.5H6.5L4 14v-2.5H1z" fill="#fff"/><path d="M3 4h9M3 6h9M3 8h6" stroke="#1a3050" stroke-width=".9"/><circle cx="14" cy="14.3" r="6" fill="#0b3d70" stroke="#6f8fb0" stroke-width="1"/><path d="M13 12.2l1.4-1v6.5" stroke="#fff" stroke-width="1.3" fill="none"/></svg>
<div class="a" style="left:1596px;top:835px;width:1px;height:33px;background:#4a6580"></div>

</body></html>
